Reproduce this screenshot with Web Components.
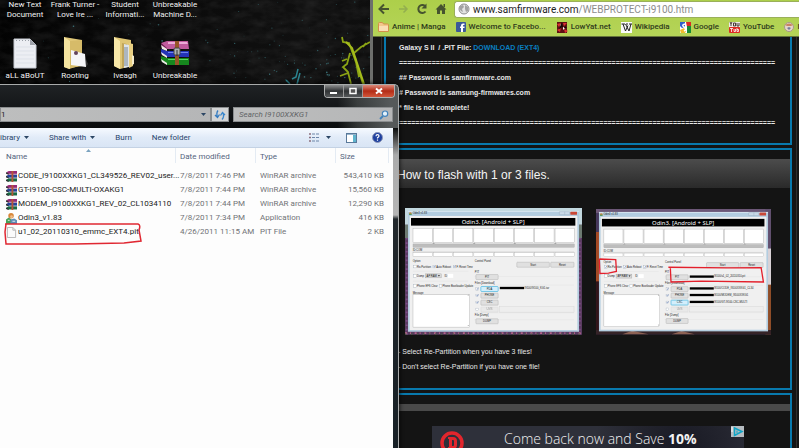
<!DOCTYPE html>
<html lang="en">
<head>
<meta charset="utf-8">
<title>Desktop</title>
<style>
html, body { margin: 0; height: 100%; overflow: hidden; background: #050505; }
body { font-family: Roboto, "Open Sans", sans-serif; }
</style>
</head>
<body>
<desk-top>
  <desk-icon label="New Text Document" icon="page"></desk-icon>
  <desk-icon label="Frank Turner - Love Ire ..." icon="folder-open"></desk-icon>
  <desk-icon label="Student Informati..." icon="folder-full"></desk-icon>
  <desk-icon label="Unbreakable Machine D..." icon="rar"></desk-icon>
  <desk-icon label="aLL aBoUT" icon="page"></desk-icon>
  <desk-icon label="Rooting" icon="folder-open"></desk-icon>
  <desk-icon label="Iveagh" icon="folder-full"></desk-icon>
  <desk-icon label="Unbreakable" icon="rar"></desk-icon>
  <web-browser slot="window"></web-browser>
  <file-explorer slot="window"></file-explorer>
</desk-top>
<script>
const ICONS = {
  page: ['0 0 24 32', `<path d="M1 2H17L23 8V31H1Z" fill="#eceef3" stroke="#c6cad2"/><path d="M17 2V8H23Z" fill="#9fa3ab"/><path d="M3 3.500H16" stroke="#9aa0a8" stroke-dasharray="1 2"/><path d="M3 10H21M3 14H21M3 18H21M3 22H21M3 26H21" stroke="#dde1e8"/>`],
  'folder-open': ['0 0 26 32', `<path d="M2 0L20 3V28L7 32L2 30Z" fill="#e0c778"/><path d="M2 0L8 4V32L2 30Z" fill="#f5e4a0"/><path d="M8 4L20 3V29L8 31Z" fill="#d6bb69"/><path d="M9 13L23 17L24 30L9 28Z" fill="#f5f5f7"/><circle cx="14" cy="16" r="2" fill="#62435d"/><path d="M24 22L26 27L24 30Z" fill="#333"/>`],
  'folder-full': ['0 0 26 32', `<path d="M2 0L19 3V29L8 32L2 29Z" fill="#dfc675"/><path d="M2 0L8 4V32L2 29Z" fill="#f7e7a8"/><path d="M10 6L15 7V30L10 31Z" fill="#c0a55b"/><path d="M12 7L17 8V30L12 31Z" fill="#dee4e9"/><path d="M13 10V29M15 10V29" stroke="#7b8895"/><path d="M17 6L21 7V29L17 31Z" fill="#e8cf82"/><path d="M20 18L22 19V27L20 28Z" fill="#f6edcc"/>`],
  rar: ['0 0 30 26', `<path d="M1 3L7 1H28L29 9H7Z" fill="#c05b9e"/><path d="M8 2H27L28 4H8Z" fill="#ecabd7"/><path d="M1 3L7 8V10L2 8Z" fill="#7b255d"/><path d="M1 9L7 11H29V17H7L1 14Z" fill="#2434b8"/><path d="M8 12H28V13H8Z" fill="#6e83f0"/><path d="M1 16L7 18H29V25H7L1 21Z" fill="#16871e"/><path d="M8 19H28V20H8Z" fill="#5cd562"/><path d="M1 5L7 9V11L2 9ZM1 12L7 16V18L2 15ZM1 19L7 23V25L2 22Z" fill="#ede9e6"/><path d="M15 1H19V25H15Z" fill="#965628"/><rect x="14" y="8" width="6" height="7" rx="1" fill="#aeb3b4" stroke="#444"/><path d="M17 10V16" stroke="#333"/>`],
  'rar-small': ['0 0 12 12', `<path d="M1 1L3 0H12V4H3L1 3Z" fill="#962b77"/><path d="M1 5L3 4H12V8H3L1 7Z" fill="#24459c"/><path d="M1 9L3 8H12V12H3L1 11Z" fill="#176c43"/><path d="M0 1L3 3V4L0 3ZM0 5L3 7V8L0 7ZM0 9L3 11V12L0 11Z" fill="#333"/><path d="M3 3.500H12M3 7.500H12M3 11.500H12" stroke="#e2e2e2" stroke-width=".7"/><rect x="6" width="2" height="12" fill="#b35636"/>`],
  app: ['0 0 12 12', `<circle cx="5.500" cy="3" r="3" fill="#d88739"/><circle cx="6" cy="4" r="1.500" fill="#f0be8a"/><path d="M0 12V7L3 5L6 7V12Z" fill="#48a05a"/><path d="M5 7L9 6L12 8V12H5Z" fill="#5e8cb8"/><path d="M2 8H4M7 9H10" stroke="#e9f1ec"/>`],
  file: ['0 0 12 12', `<path d="M1.500 .5H7.500L10.500 3.500V11.500H1.500Z" fill="#fbfbfb" stroke="#b5b5b5"/><path d="M7.500 .5V3.500H10.500" fill="none" stroke="#b5b5b5"/>`],
  back: ['0 0 12 12', `<path d="M11 6H2M6 1.500L1.500 6L6 10.500" fill="none" stroke="#46532f" stroke-width="2"/>`],
  forward: ['0 0 12 12', `<path d="M2 6H10M6.500 2.500L10 6L6.500 9.500" fill="none" stroke="#93ae4f" stroke-width="1.500"/>`],
  reload: ['0 0 12 12', `<path d="M9 3A4 4 0 1 0 9.500 8.500" fill="none" stroke="#46532f" stroke-width="2"/><path d="M10.500 .5V5.500H5.500Z" fill="#46532f"/>`],
  home: ['0 0 12 12', `<path d="M6 1L11.500 6.500H10V11H7V7.500H5V11H2V6.500H.5Z" fill="#46532f"/><path d="M8.500 1H10V4H8.500Z" fill="#46532f"/>`],
  globe: ['0 0 12 12', `<circle cx="6" cy="6" r="5" fill="#e4e4e4" stroke="#8e8e8e"/><path d="M2 3L5 2L6 4L4 6L5 9L3 8L1 5ZM7 2L10 4L10 8L8 9L7 6Z" fill="#a2a2a2"/>`],
  folder: ['0 0 11 10', `<path d="M.5 1.500Q.5 .5 1.500 .5H4.500L5.500 2H9.500Q10.500 2 10.500 3V9.500H.5Z" fill="#f3c88c" stroke="#d2904a"/><path d="M1 4H10V9H1Z" fill="#fadfb4"/>`],
  facebook: ['0 0 10 10', `<rect width="10" height="10" rx="1" fill="#3b5998"/><path d="M5 10V3.500Q5 1.500 7 1.500H8.500V3H7.500Q7 3 7 3.700V4.500H8.500V6H7V10ZM4 4.500H6V6H4Z" fill="#fff"/>`],
  lowyat: ['0 0 12 11', `<rect x="1" width="10" height="11" fill="#5e1113"/><path d="M1 2L5 1L3 5ZM7 1L11 1L8 4ZM1 8L5 6L4 10ZM8 7L12 9L9 11Z" fill="#db3032"/><path d="M4 2L6 4L5 6ZM7 5L9 6L7 8Z" fill="#fff"/><path d="M6 0L7 5L3 7ZM9 4L11 6L8 6Z" fill="#180607"/>`],
  wiki: ['0 0 11 11', `<rect width="11" height="11" fill="#fafafa"/><path d="M.5 2H4M5 2H7M8 2H11M2 2L4.500 9L7 3.500M4.500 2L8 9L10 2" fill="none" stroke="#222"/>`],
  google: ['0 0 11 11', `<rect width="11" height="11" rx="1" fill="#fff"/><path d="M0 0H5V5L2 6L0 4Z" fill="#315fcc"/><path d="M6 0H11V5H7Z" fill="#d92b25"/><path d="M7 4H11V11H7Z" fill="#178b36"/><path d="M0 8L4 6L6 9L5 11H1Z" fill="#f0bc2c"/><path d="M5 2Q1 3 4 5Q8 7 4 9" fill="none" stroke="#fff" stroke-width="1.500"/>`],
  youtube: ['0 0 11 11', `<rect width="11" height="5" fill="#f1ece6"/><path d="M1 0L2 2L3 0M2 2V4M4.500 1H6.500V4H4.500ZM8 1V4H10V1" fill="none" stroke="#473a36"/><rect y="5" width="11" height="6" rx="1" fill="#de2b23"/><path d="M1 6.500H4M2.500 6.500V10M5 7V9.500H6.500V7M8 6V9.500H9.500V7.500H8" fill="none" stroke="#fff" stroke-width=".8"/>`],
  indo: ['0 0 10 10', `<circle cx="5" cy="5" r="4.500" fill="#e6d6c8" stroke="#a89a87"/><path d="M1 3Q5 0 9 3L7 4H3Z" fill="#c88462"/><path d="M3 6L5 8L7 6L5 5Z" fill="#737c9a"/>`],
  search: ['0 0 10 10', `<circle cx="6" cy="3.700" r="2.700" fill="#e3f1fb" stroke="#4383bb" stroke-width="1.200"/><path d="M4 6L1 9" stroke="#4383bb" stroke-width="1.800"/>`],
  refresh: ['0 0 12 12', `<path d="M4 1.500Q2 4 3.500 8M1 6L3.500 8.500L5.500 5.500" fill="none" stroke="#327ac0" stroke-width="1.300"/><path d="M8 10.500Q10.500 8 9 4M6.500 6.500L8.500 3.500L11 6" fill="none" stroke="#3a86cb" stroke-width="1.300"/>`],
  view: ['0 0 11 9', `<path d="M0 1H2M0 4.500H2M0 8H2" stroke="#8c6f7e" stroke-width="1.500"/><path d="M3 1H6M7 1H10M3 4.500H6M7 4.500H10M3 8H6M7 8H10" stroke="#6d86a8"/>`],
  pane: ['0 0 11 10', `<rect x=".5" y=".5" width="10" height="9" fill="#fff" stroke="#59799a"/><rect x="7" y="1" width="3" height="8" fill="#5fb4cd"/><path d="M1 1.500H10" stroke="#99b5cc"/>`],
  help: ['0 0 11 11', `<circle cx="5.500" cy="5.500" r="5" fill="#1d3f9f" stroke="#8b96b8"/><path d="M4 4.200Q4 2.700 5.500 2.700Q7 2.700 7 4Q7 5 5.500 5.700V6.500M5.500 7.500V8.700" fill="none" stroke="#fff" stroke-width="1.200"/>`],
  caret: ['0 0 5 3', `<path d="M0 0H5L2.500 3Z" fill="#2c4664"/>`],
  min: ['0 0 8 8', `<path d="M0 5H7V7H0Z" fill="#fff"/>`],
  max: ['0 0 8 8', `<path d="M1 1.500H7V6.500H1Z" fill="#555" stroke="#fff" stroke-width="1.500"/>`],
  close: ['0 0 8 8', `<path d="M1 1.500L7 6.500M7 1.500L1 6.500" stroke="#fff" stroke-width="2"/>`],
  brand: ['0 0 24 24', `<circle cx="12" cy="12" r="10" fill="none" stroke="#e2262d" stroke-width="3.500"/><path d="M8 6H13Q17 6 17 10V14Q17 18 13 18H8V16H9V8H8ZM12 9V15H13Q14 15 14 14V10Q14 9 13 9Z" fill="#e2262d" fill-rule="evenodd"/>`],
  adchoice: ['0 0 13 11', `<rect width="13" height="11" fill="#b6bcc1"/><path d="M3.500 2L11 5.500L3.500 9.500Z" fill="none" stroke="#10a5c6" stroke-width="1.500"/><path d="M6 4.500V7" stroke="#10a5c6"/><path d="M1 1V6" stroke="#fff"/>`]
};

class Base extends HTMLElement {
  constructor() { super(); this.attachShadow({ mode: 'open' }); }
  connectedCallback() { this.shadowRoot.innerHTML = this.view(); }
}

customElements.define('ui-icon', class extends Base {
  view() {
    const [box, body] = ICONS[this.getAttribute('name')];
    const [, , w, h] = box.split(' ');
    return `<style>:host{display:inline-block;flex:none;width:${w}px;height:${h}px}svg{display:block;width:100%;height:100%}</style>
      <svg viewBox="${box}" aria-hidden="true">${body}</svg>`;
  }
});

customElements.define('desk-icon', class extends Base {
  view() {
    return `<style>
      :host{display:flex;flex-direction:column;align-items:center;width:50px;height:71px}
      .pic{display:flex;align-items:center;justify-content:center;height:32px;margin-bottom:2px}
      span{width:50px;text-align:center;font-size:8px;line-height:10px;color:#f2f2f2;text-shadow:0 1px 2px #000}
      </style><div class="pic"><ui-icon name="${this.getAttribute('icon')}"></ui-icon></div><span>${this.getAttribute('label')}</span>`;
  }
});

customElements.define('desk-top', class extends Base {
  view() {
    let seed = 7, specks = '';
    const rnd = () => (seed = (seed * 16807) % 2147483647) / 2147483647;
    for (let i = 0; i < 130; i++) {
      const low = i > 70;
      const x = low ? 230 + rnd() * 140 : rnd() * 370, y = low ? 50 + rnd() * 34 : rnd() * 84;
      specks += `<circle cx="${x.toFixed(1)}" cy="${y.toFixed(1)}" r="${(.3 + rnd() * .5).toFixed(1)}" fill="#438a92" opacity="${(.25 + rnd() * .6).toFixed(1)}"/>`;
    }
    return `<style>
      :host{display:block;position:relative;height:100vh;overflow:hidden;background:linear-gradient(100deg,#030303,#101010 35%,#0a0a0a 60%,#101010)}
      .wall{position:absolute;left:0;top:0;width:400px;height:100px}
      .icons{display:grid;grid-template-columns:repeat(4,50px);position:relative;margin-top:-34px}
      </style>
      <svg class="wall" viewBox="0 0 400 100" aria-hidden="true">
        <filter id="n"><feTurbulence type="fractalNoise" baseFrequency=".06 .12" numOctaves="3" seed="4"/><feColorMatrix values="0 0 0 0 .3  0 0 0 0 .3  0 0 0 0 .3  .9 0 0 0 -.3"/></filter>
        <rect width="400" height="100" filter="url(#n)" opacity=".25"/>${specks}
        <path d="M298 69L296 77L292 79M300 73L297 84M286 80L290 84" stroke="#2b8490" stroke-width="1.500" fill="none"/>
        <path d="M342 37L343 42L349 43L353 54L358 68L363 84M350 53L347 64L343 67L348 72L351 84M354 53L361 47L370 42M363 47L366 43M347 59L342 61M348 73L340 76M355 57L359 77" stroke="#8ba414" stroke-width="1.800" fill="none"/>
        <path d="M346 42L352 48L361 75L364 84" stroke="#a6bd1c" stroke-width="2" fill="none"/>
      </svg>
      <div class="icons"><slot></slot></div><slot name="window"></slot>`;
  }
});

customElements.define('book-mark', class extends Base {
  view() {
    return `<style>:host{display:block;flex:none}a{display:flex;align-items:center;gap:3px;color:#2f3a1b;font-size:8px;font-weight:500;line-height:14px;text-decoration:none;white-space:nowrap}</style>
      <a href="#"><ui-icon name="${this.getAttribute('icon')}"></ui-icon><slot></slot></a>`;
  }
});

customElements.define('odin-shot', class extends Base {
  view() {
    const two = this.getAttribute('kind') === 'three';
    const t = (x, y, s, e = '') => `<text x="${x}" y="${y}" ${e}>${s}</text>`;
    const btn = (x, y, w, s, on) => `<rect x="${x}" y="${y}" width="${w}" height="15" rx="2" fill="${on ? '#d3eefb' : '#e0e0e0'}" stroke="${on ? '#43b2de' : '#9b9b9b'}" stroke-width="${on ? 2 : 1}"/>` + t(x + w / 2, y + 10, s, 'text-anchor="middle"');
    const box = (x, y, on) => `<rect x="${x}" y="${y}" width="8" height="8" fill="#fff" stroke="#9aa7b5"/>` + (on ? `<path d="M${x + 2} ${y + 4}l2 2l3 -5" stroke="#31539c" stroke-width="1.500" fill="none"/>` : '');
    const file = (y, s) => `<rect x="285" y="${y}" width="73" height="7" fill="#000"/>` + t(359, y + 6, s);
    const cells = Array.from({ length: 8 }, (_, i) => `<rect x="${24 + i * 61}" y="61" width="58" height="43" fill="#fff" stroke="#999"/><rect x="${24 + i * 61}" y="134" width="58" height="11" fill="#fff" stroke="#aaa"/>`).join('');
    const back = two
      ? `<rect width="532" height="381" fill="#45385c"/><path d="M0 0H532V12H0Z" fill="#6c5777"/><path d="M0 70H12V300H0Z" fill="#a44a25"/><path d="M0 220H12V381H0Z" fill="#31151b"/><path d="M515 0H532V120H515Z" fill="#62506f"/><path d="M515 120H532V290H515Z" fill="#d9d2d6"/><path d="M515 230H532V381H515Z" fill="#8f4d28"/><path d="M0 368H532V381H0Z" fill="#352327"/><path d="M80 381L110 370L160 381ZM230 381L260 371L300 381Z" fill="#8d6254"/>`
      : `<rect width="532" height="381" fill="#5b3d62"/><path d="M0 0H532V50H0Z" fill="#c3d9e0"/><path d="M0 50H532V90H0Z" fill="#6d7b72"/><path d="M5 90V381M525 90V381" stroke="#7d4c86" stroke-width="6" stroke-dasharray="5 8"/><path d="M0 376H532" stroke="#b5658a" stroke-width="5" stroke-dasharray="6 9 3 11"/><path d="M0 379H532" stroke="#485c3d" stroke-width="4" stroke-dasharray="4 14"/>`;
    return `<style>:host{display:block;flex:none;width:${two ? 175 : 177}px}svg{display:block;width:100%}text{font:8px "Liberation Sans",sans-serif;fill:#222}text.h{font:18px "Noto Sans",sans-serif;fill:#fff}</style>
    <svg viewBox="0 0 532 381" role="img" aria-label="Odin3 v1.83">${back}
      <rect x="9" y="9" width="514" height="363" fill="#b3cde0"/><rect x="9" y="9" width="514" height="2" fill="#e5eff5"/><rect x="14" y="24" width="504" height="343" fill="#f0f0f0"/>
      <circle cx="16" cy="17" r="4" fill="#d6863c"/><path d="M12 17H20V21H12Z" fill="#4f9b63"/>${t(23, 19, 'Odin3 v1.83')}
      <rect x="464" y="11" width="31" height="9" rx="1" fill="#c8d9e7" stroke="#899db0"/><path d="M480 11V20" stroke="#899db0"/><rect x="497" y="11" width="20" height="9" rx="1" fill="#ca4836"/>
      <rect x="18" y="30" width="494" height="23" fill="#000"/>${t(265, 48, 'Odin3. [Android + SLP]', 'class="h" text-anchor="middle"')}
      ${cells}<rect x="24" y="108" width="485" height="10" fill="#bdbdbd" stroke="#a4a4a4"/><path d="M82 108l4 -4l4 4M204 108l4 -4l4 4M326 108l4 -4l4 4M448 108l4 -4l4 4" fill="#a4a4a4"/>
      ${t(23, 130, 'ID:COM')}<path d="M23 132H508" stroke="#aaa"/>
      ${t(23, 163, 'Option')}${box(26, 172, two)}${t(36, 179, 'Re-Partition')}${box(84, 172, 1)}${t(94, 179, 'Auto Reboot')}${box(145, 172, 1)}${t(155, 179, 'F. Reset Time')}
      <path d="M24 190H190M24 220H190M208 206H508M208 232H508M208 315H508M208 336H508" stroke="#ddd"/>
      ${box(26, 200)}${t(36, 207, 'Dump')}<rect x="61" y="198" width="48" height="12" fill="#d8d8d8" stroke="#999"/>${t(65, 207, 'AP RAM')}<path d="M99 202h6l-3 4z"/>${t(119, 207, 'ID')}<rect x="129" y="198" width="16" height="12" fill="#fff"/>
      ${box(26, 230)}${t(36, 237, 'Phone EFS Clear')}${box(103, 230)}${t(113, 237, 'Phone Bootloader Update')}
      ${t(23, 258, 'Message')}<rect x="24" y="261" width="170" height="97" fill="#fff" stroke="#999"/><path d="M188 263h4l-2 -3zM188 352h4l-2 3z" fill="#888"/>
      ${t(210, 163, 'Control Panel')}${btn(336, 163, 98, 'Start')}${btn(438, 163, 70, 'Reset')}
      ${t(210, 194, 'PIT')}${btn(213, 200, 67, 'PIT')}${t(210, 229, 'Files [Download]')}
      ${box(213, 239, 1)}${btn(228, 236, 52, 'PDA', !two)}${box(213, 259, 1)}${btn(228, 256, 52, 'PHONE')}${box(213, 280, 1)}${btn(228, 277, 52, 'CSC', two)}
      ${box(213, 301)}<g opacity=".4">${btn(228, 298, 52, 'UMS')}</g><rect x="285" y="297" width="223" height="16" fill="#eee" stroke="#ccc"/>
      ${t(210, 326, 'File [Dump]')}${btn(213, 333, 67, 'DUMP')}
      ${two ? file(202, 'I9100/u1_02_20110310.pit') + file(238, 'I9100/CODE_I9100XXKG1_CL34') + file(258, 'I9100/MODEM_I9100XXKG1') + file(279, 'I9100/GT-I9100-CSC-MULTI') : file(237, 'I9100/I9100_KG1.tar')}
      ${two ? '<path d="M10 152L60 154L62 190L38 195L12 196L10 152M220 177L400 179L502 178L509 222L320 219L228 222L226 179" fill="none" stroke="#e3202c" stroke-width="4"/>' : ''}
    </svg>`;
  }
});

customElements.define('site-panel', class extends Base {
  view() {
    return `<style>
      :host{display:block;border:2px solid #0879ad;background:#141414;box-sizing:border-box}
      h2{margin:9px 0 0;height:29px;padding-left:11px;font:12px/33px "Liberation Sans",Arial,sans-serif;color:#f4f4f4;background:linear-gradient(#4c4c4c,#2a2a2a);white-space:nowrap}
      h2.thin{height:7px;background:#494949}
      </style>${this.hasAttribute('heading') ? `<h2 class="${this.getAttribute('heading') ? '' : 'thin'}">${this.getAttribute('heading')}</h2>` : ''}<slot></slot>`;
  }
});

customElements.define('web-browser', class extends Base {
  view() {
    const rule = '='.repeat(92);
    return `<style>
      :host{display:flex;flex-direction:column;position:absolute;left:370px;right:0;top:0;bottom:0;border-left:3px solid #6d6f6c;box-sizing:border-box;background:#141414;overflow:hidden}
      header{background:linear-gradient(#adcf4a,#b5d458);flex:none;height:37px;border-bottom:1px solid #65743a;box-sizing:border-box;overflow:hidden}
      .bar{display:flex;align-items:center;height:18px;padding-left:5px;gap:7px}
      button{all:unset;display:flex}
      .url{display:flex;flex:1;align-items:center;gap:3px;height:17px;padding-left:3px;background:#fff;border:1px solid #9ab05a;border-right:0;border-radius:3px 0 0 3px;box-sizing:border-box;overflow:hidden;font-size:10px;line-height:15px;white-space:nowrap;color:#8c8c8c}
      .url b{font-weight:400;color:#222}
      nav{display:flex;gap:10px;padding-left:5px;height:18px;align-items:center}
      main{flex:1;margin:0 2px 0 8px;padding:0 4px 0 2px;border:solid #2e2e2e;border-width:0 1px;overflow:hidden;font:bold 7px/15px "Liberation Sans",Arial,sans-serif;color:#e8e8e8;display:flex;flex-direction:column;gap:3px}
      site-panel{flex:none}
      site-panel.first{border-top:0}
      p{margin:0;white-space:pre}
      .text{padding:3px 0 13px 13px}
      .text a{color:#0a7fc0;text-decoration:none}
      .shots{display:flex;align-items:flex-end;gap:14px;padding:20px 0 9px 19px}
      .notes{font-weight:400;padding:0 0 14px 12px}
      .ad{display:flex;align-items:flex-start;justify-content:space-between;margin:15px 46px 0 46px;height:40px;background:radial-gradient(circle at 80% 60%,#181923,#23242e 18%,#2e303a 35%)}
      .ad a{display:flex;gap:40px;padding-left:8px;color:#f2f2f2;text-decoration:none;font:300 14px/26px "Open Sans","Noto Sans",sans-serif;white-space:nowrap}
      .ad b{font-weight:700}
      .ad .logo{margin-top:5px}
      </style>
      <header>
        <div class="bar"><button aria-label="Back"><ui-icon name="back"></ui-icon></button><button aria-label="Forward"><ui-icon name="forward"></ui-icon></button><button aria-label="Reload"><ui-icon name="reload"></ui-icon></button><button aria-label="Home"><ui-icon name="home"></ui-icon></button>
        <div class="url" role="textbox" aria-label="Address"><ui-icon name="globe"></ui-icon><span><b>www.samfirmware.com</b>/WEBPROTECT-i9100.htm</span></div></div>
        <nav><book-mark icon="folder">Anime | Manga</book-mark><book-mark icon="facebook">Welcome to Facebo...</book-mark><book-mark icon="lowyat">LowYat.net</book-mark><book-mark icon="wiki">Wikipedia</book-mark><book-mark icon="google">Google</book-mark><book-mark icon="youtube">YouTube</book-mark><book-mark icon="indo">Ind</book-mark></nav>
      </header>
      <main>
        <site-panel class="first"><div class="text"><p>Galaxy S II  / .PIT File: <a href="#">DOWNLOAD (EXT4)</a></p><p>${rule}</p><p>## Password is samfirmware.com</p><p># Password is samsung-firmwares.com</p><p>* file is not complete!</p><p>${rule}</p></div></site-panel>
        <site-panel heading="How to flash with 1 or 3 files."><div class="shots"><odin-shot kind="one"></odin-shot><odin-shot kind="three"></odin-shot></div><div class="notes"><p>- Select Re-Partition when you have 3 files!</p><p>- Don't select Re-Partition if you have one file!</p></div></site-panel>
        <site-panel heading=""><div class="ad"><a href="#"><ui-icon class="logo" name="brand"></ui-icon><span>Come back now and Save <b>10%</b></span></a><ui-icon name="adchoice"></ui-icon></div></site-panel>
      </main>`;
  }
});

customElements.define('file-explorer', class extends Base {
  view() {
    const rows = [
      ['rar-small', 'CODE_I9100XXKG1_CL349526_REV02_user...', '7/8/2011 7:46 PM', 'WinRAR archive', '543,410 KB'],
      ['rar-small', 'GT-I9100-CSC-MULTI-OXAKG1', '7/8/2011 7:44 PM', 'WinRAR archive', '15,560 KB'],
      ['rar-small', 'MODEM_I9100XXKG1_REV_02_CL1034110', '7/8/2011 7:44 PM', 'WinRAR archive', '12,290 KB'],
      ['app', 'Odin3_v1.83', '7/8/2011 7:34 PM', 'Application', '416 KB'],
      ['file', 'u1_02_20110310_emmc_EXT4.pit', '4/26/2011 11:15 AM', 'PIT File', '2 KB']];
    return `<style>
      :host{display:flex;flex-direction:column;position:absolute;left:-6px;top:84px;bottom:-6px;width:405px;box-sizing:border-box;padding:0 5px 0 6px;border:1px solid #a9abab;border-bottom:0;border-left:0;border-radius:0 5px 0 0;background:linear-gradient(90deg,transparent 85%,#7f858255 90%,#55595a 98%) 0 0/100% 43px no-repeat,linear-gradient(#1f2225 0,#0a0c0d 43px,#aaa 70px,#b5b5b5 130px,#22282c 134px,#172026);box-shadow:0 0 5px #000;font-size:8px;color:#222}
      button{all:unset;display:flex;align-items:center}
      .caps{display:flex;align-self:flex-end;flex:none;height:12px;margin-right:-2px;border:1px solid #aeb0b0;border-top:0;border-radius:0 0 4px 4px;overflow:hidden}
      .caps button{justify-content:center;width:18px;background:linear-gradient(#8e9090,#303335 50%,#55585a);border-right:1px solid #999}
      .caps button:last-child{width:31px;border:0;background:linear-gradient(#dc8b7b,#b32c16 50%,#d2573b)}
      .nav{display:flex;flex:none;margin-top:9px;height:15px}
      .nav>*{box-sizing:border-box;border:1px solid #8b8e90;background:linear-gradient(90deg,#bdbebe,#b5b6b7)}
      .addr{display:flex;align-items:center;justify-content:space-between;width:211px;padding-right:4px;line-height:13px}
      .nav button{width:18px;justify-content:center;background:#d3d5d6}
      .find{display:flex;align-items:center;flex:1;margin-left:4px;padding:0 3px 0 5px}
      input{all:unset;flex:1;min-width:0;font:italic 8px/13px Roboto,sans-serif}
      input::placeholder{color:#626466;opacity:1}
      .tools{display:flex;flex:none;align-items:center;margin-top:6px;height:20px;color:#29456c;background:linear-gradient(#f6faff,#e1ebf8 50%,#d9e5f5);border-bottom:1px solid #c4d2e4;box-sizing:border-box}
      .tools button{gap:4px;margin-right:20px;white-space:nowrap}
      .tools .r{margin:0 0 0 15px;gap:6px}
      .tools .r.f{margin-left:auto}
      .tools .r.l{margin-right:10px}
      .list{position:relative;flex:1;background:#fdfdfd}
      table{border-collapse:collapse;table-layout:fixed;width:100%}
      th,td{padding:0;height:14px;line-height:14px;font-weight:400;text-align:left;color:#707276;white-space:nowrap}
      th{height:21px;line-height:18px;vertical-align:top;color:#54647e}
      th span{display:block;height:15px;margin-right:4px;border-right:1px solid #e4ebf3}
      th:first-child{padding-left:6px}
      td:first-child{padding-left:6px;color:#222}
      td div{display:flex;align-items:center;gap:1px;height:14px}
      td ui-icon{width:11px;height:11px}
      td:last-child{text-align:right;padding-right:9px}
      .pen{position:absolute;left:4px;top:74px;width:140px;height:24px}
      .sort{position:absolute;left:86px;top:1px;width:5px;height:3px}
      </style>
      <div class="caps"><button aria-label="Minimize"><ui-icon name="min"></ui-icon></button><button aria-label="Maximize"><ui-icon name="max"></ui-icon></button><button aria-label="Close"><ui-icon name="close"></ui-icon></button></div>
      <div class="nav"><div class="addr"><span>1</span><ui-icon name="caret"></ui-icon></div><button aria-label="Refresh"><ui-icon name="refresh"></ui-icon></button><label class="find"><input aria-label="Search" placeholder="Search I9100XXKG1"><ui-icon name="search"></ui-icon></label></div>
      <div class="tools"><button>ibrary <ui-icon name="caret"></ui-icon></button><button>Share with <ui-icon name="caret"></ui-icon></button><button>Burn</button><button>New folder</button>
        <button class="r f" aria-label="View"><ui-icon name="view"></ui-icon><ui-icon name="caret"></ui-icon></button><button class="r" aria-label="Preview pane"><ui-icon name="pane"></ui-icon></button><button class="r l" aria-label="Help"><ui-icon name="help"></ui-icon></button></div>
      <div class="list">
        <table><colgroup><col style="width:180px"><col style="width:80px"><col style="width:80px"><col></colgroup>
          <thead><tr><th><span>Name</span></th><th><span>Date modified</span></th><th><span>Type</span></th><th><span>Size</span></th></tr></thead>
          <tbody>${rows.map(r => `<tr><td><div><ui-icon name="${r[0]}"></ui-icon>${r[1]}</div></td>${r.slice(2).map(c => `<td>${c}</td>`).join('')}</tr>`).join('')}</tbody></table>
        <svg class="sort" viewBox="0 0 5 3" aria-hidden="true"><path d="M0 3L2.500 0L5 3Z" fill="#7ba3bf"/></svg>
        <svg class="pen" viewBox="0 0 140 24" aria-hidden="true"><path d="M1 2L134 2Q137 3 135 8L137 19L120 21L70 22L2 22L1 10L2 2" fill="none" stroke="#e02832" stroke-width="1.500"/></svg>
      </div>`;
  }
});
</script>
</body>
</html>
